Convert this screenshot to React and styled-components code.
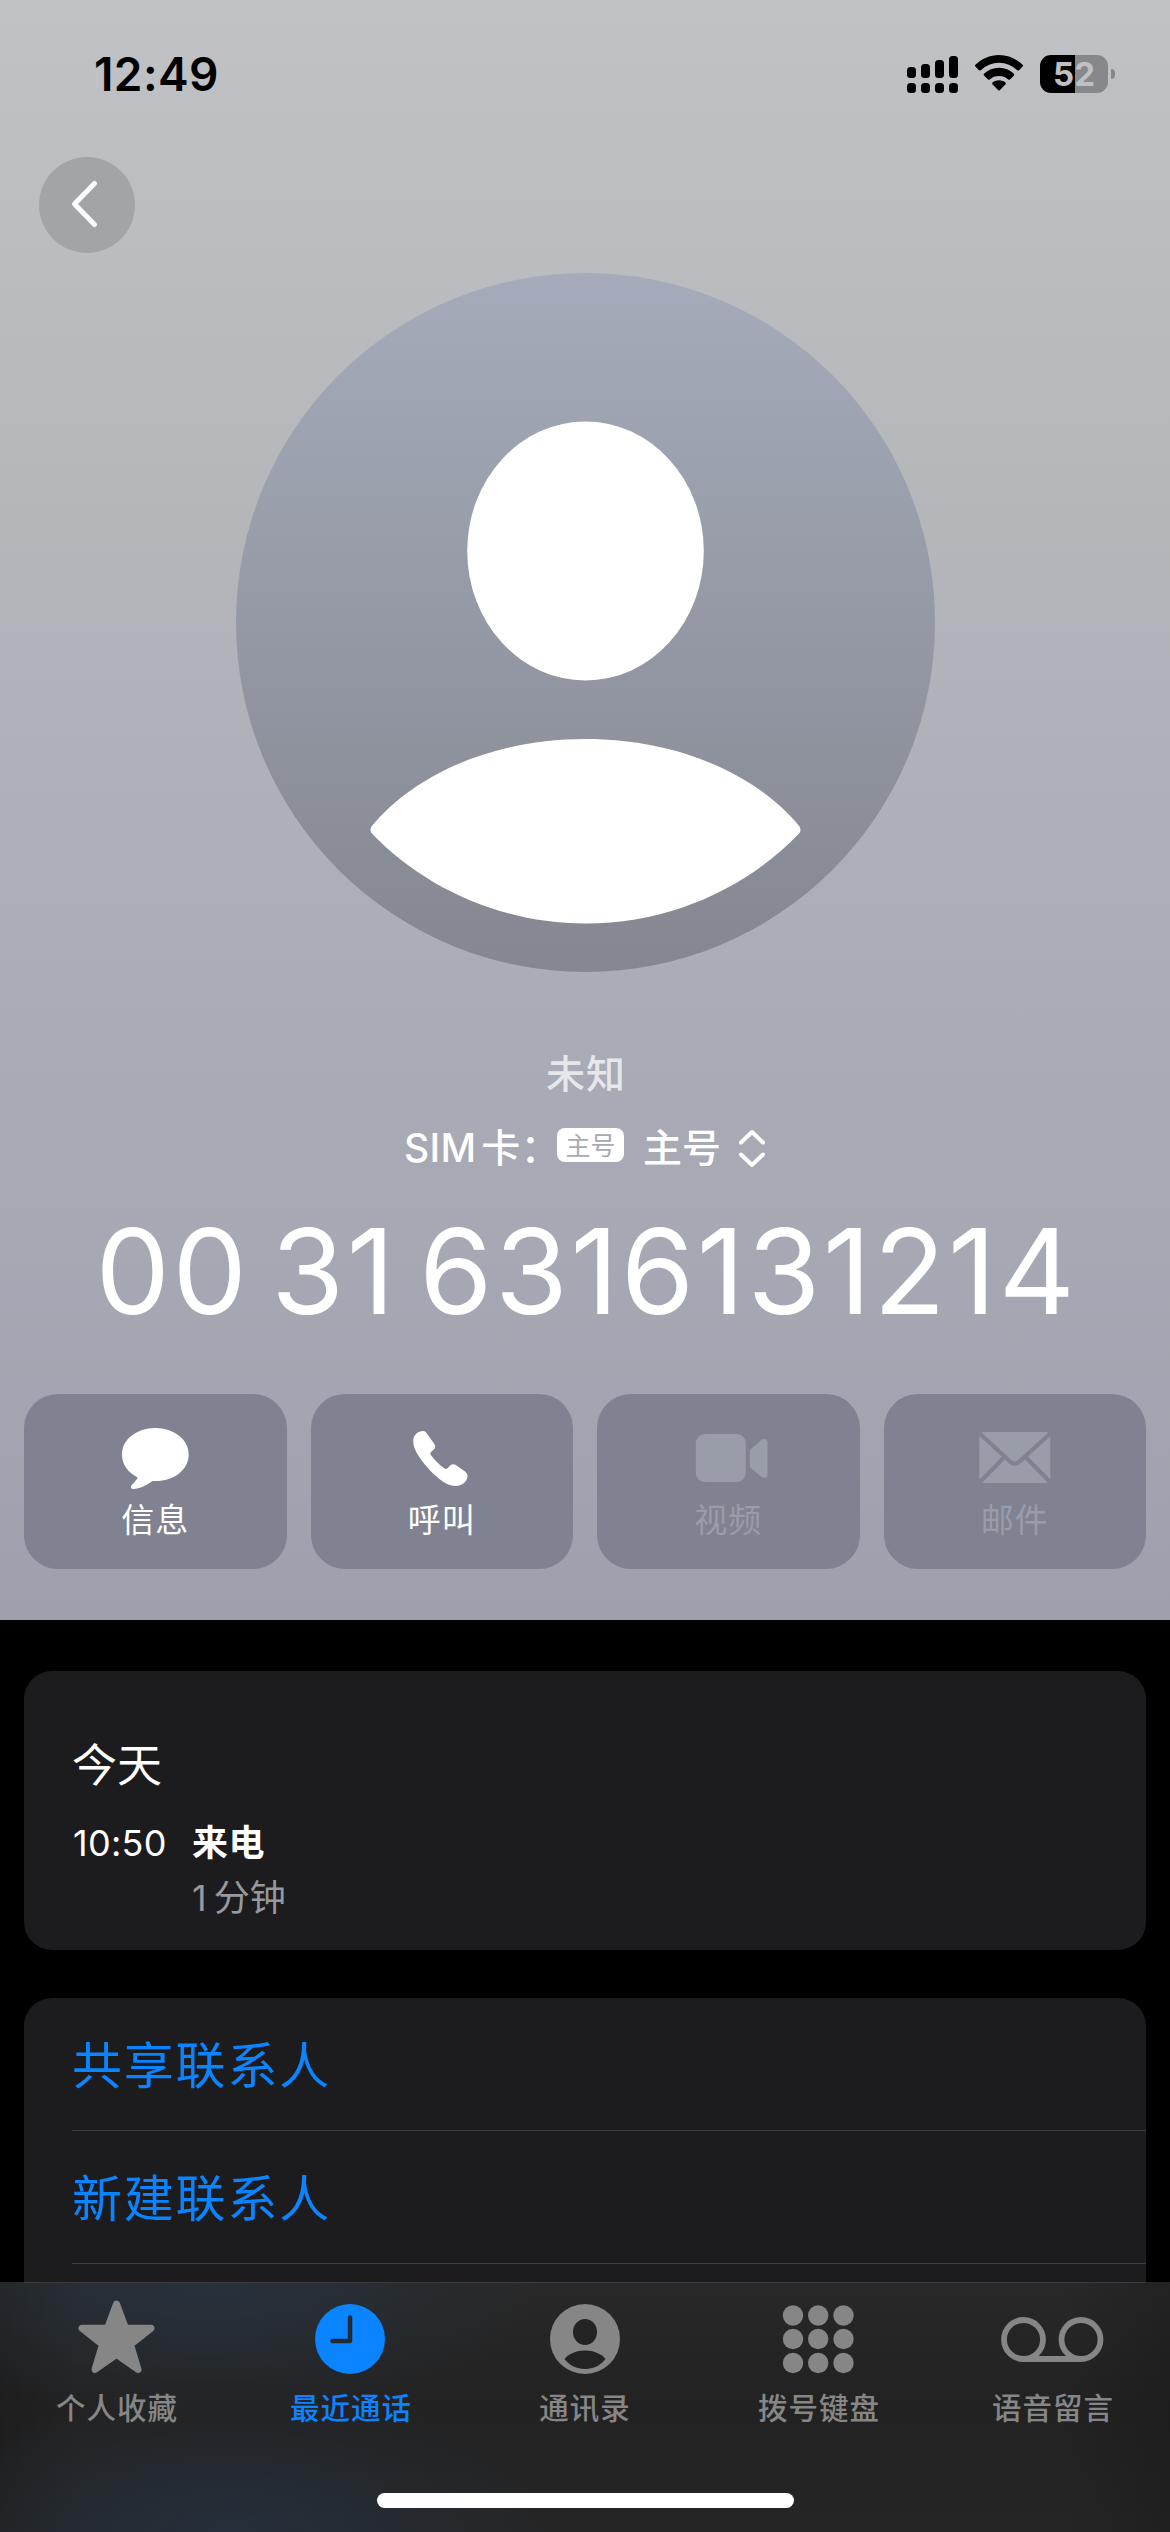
import styled, { createGlobalStyle } from "styled-components";

const GlobalStyle = createGlobalStyle`
  * {
    box-sizing: border-box;
  }

  body {
    margin: 0;
    background: #000;
    color: #fff;
    font-family: Inter, "Noto Sans CJK SC", sans-serif;
  }

  svg {
    display: block;
  }
`;

const Screen = styled.div`
  width: 1170px;
  height: 2532px;
  display: flex;
  flex-direction: column;
  overflow: hidden;
`;

const Content = styled.main`
  flex: 1;
  min-height: 0;
  overflow: hidden;
`;

/* Poster header */

const Poster = styled.header`
  height: 1620px;
  display: flex;
  flex-direction: column;
  align-items: center;
  background: linear-gradient(
    180deg,
    #c1c2c6 0,
    #bbbcc0 270px,
    #b5b6ba 530px,
    #b1b3ba 650px,
    #acafb9 880px,
    #a9abb7 1040px,
    #a6a8b4 1240px,
    #9fa0ad 1620px
  );
`;

const StatusBar = styled.div`
  width: 100%;
  height: 147px;
  display: flex;
  justify-content: space-between;
  padding: 48px 55px 0 94px;
`;

const Clock = styled.span`
  color: #000;
  font-size: 46px;
  font-weight: 600;
  line-height: 52px;
  letter-spacing: 0.4px;
`;

const StatusIcons = styled.div`
  display: flex;
  align-items: flex-start;
  gap: 16px;
  padding-top: 7px;
`;

const BatteryWrapper = styled.div`
  display: flex;
  align-items: center;
  gap: 3px;
  padding-left: 1px;
`;

const Battery = styled.div`
  width: 68px;
  height: 38px;
  border-radius: 11px;
  background: linear-gradient(90deg, #000 35px, #87888c 35px);
  color: #bfc0c4;
  font-size: 33px;
  font-weight: 700;
  line-height: 38px;
  text-align: center;
`;

const BatteryCap = styled.div`
  width: 4px;
  height: 10px;
  border-radius: 0 5px 5px 0;
  background: #87888c;
`;

const NavRow = styled.div`
  width: 100%;
  height: 126px;
  padding: 10px 39px 0;
`;

const BackButton = styled.button`
  width: 96px;
  height: 96px;
  padding: 0;
  border: 0;
  border-radius: 50%;
  background: #a3a4a8;
`;

const Name = styled.div`
  margin-top: 77px;
  padding-left: 2px;
  color: #e6e7ea;
  font-size: 39px;
  font-weight: 500;
  line-height: 50px;
  letter-spacing: 1px;
`;

const SimRow = styled.div`
  display: flex;
  align-items: center;
  height: 50px;
  margin-top: 24px;
  font-size: 39px;
  font-weight: 500;
  line-height: 50px;

  svg {
    margin-left: 17px;
  }
`;

const SimLabel = styled.span`
  margin-right: -3px;
  letter-spacing: 0.4px;
  word-spacing: -6px;
`;

const SimBadge = styled.span`
  width: 67px;
  height: 34px;
  margin: 0 19px 6px 0;
  border-radius: 8px;
  background: #fff;
  color: #a7a9b5;
  font-size: 25px;
  font-weight: 400;
  line-height: 37px;
  text-align: center;
`;

const PhoneNumber = styled.h1`
  margin: 33px 0 0;
  padding-left: 3px;
  font-size: 118px;
  font-weight: 400;
  line-height: 130px;
  letter-spacing: 2.6px;
  word-spacing: -14px;
  white-space: nowrap;
`;

const Actions = styled.div`
  width: 100%;
  display: grid;
  grid-template-columns: repeat(4, 1fr);
  gap: 24px;
  margin-top: 58px;
  padding: 0 24px;
`;

const ActionButton = styled.button`
  height: 175px;
  display: flex;
  flex-direction: column;
  align-items: center;
  padding: 30px 0 0;
  border: 0;
  border-radius: 34px;
  background: #808291;
  color: ${({ $off }) => ($off ? "#999ca9" : "#fff")};
  font-family: inherit;
  font-size: 33px;
  font-weight: 400;
  line-height: 40px;
  letter-spacing: 1px;

  svg {
    margin-bottom: 6px;
  }
`;

/* Call history and contact options */

const Card = styled.section`
  margin: ${({ $top }) => $top}px 24px 0;
  border-radius: 28px;
  background: #1c1c1e;
`;

const CallCard = styled(Card)`
  height: 279px;
  padding: 65px 48px 0;
`;

const Day = styled.h2`
  margin: 0 0 20px;
  font-size: 45px;
  font-weight: 400;
  line-height: 60px;
`;

const CallRow = styled.div`
  display: grid;
  grid-template-columns: 120px 1fr;
  font-size: 36px;
  line-height: 55px;
`;

const CallTime = styled.span`
  padding-left: 1px;
  letter-spacing: 0.3px;
`;

const CallKind = styled.div`
  font-weight: 700;
  letter-spacing: 0.5px;
`;

const Duration = styled.div`
  grid-column: 2;
  color: #98989f;
  word-spacing: -3px;
`;

const Options = styled(Card)`
  height: 400px;
  padding-left: 48px;
`;

const Option = styled.div`
  height: 133px;
  padding-top: 2px;
  border-bottom: 1px solid #3d3d41;
  color: #0a84ff;
  font-size: 50px;
  font-weight: 400;
  line-height: 132px;
  letter-spacing: 1.8px;
`;

/* Tab bar */

const TabBar = styled.nav`
  height: 250px;
  background:
    radial-gradient(ellipse 330px 140px at 210px 0, rgba(38, 56, 74, 0.6), transparent),
    radial-gradient(ellipse 330px 140px at 230px 100%, rgba(36, 54, 74, 0.6), transparent),
    linear-gradient(90deg, rgba(0, 0, 0, 0.14), transparent 80px 1060px, rgba(0, 0, 0, 0.14)),
    linear-gradient(180deg, #282828, #222222 50%, #252525);
`;

const Hairline = styled.div`
  height: 1px;
  margin: 0 24px;
  background: #3c3c3d;
`;

const Tabs = styled.div`
  height: 210px;
  display: grid;
  grid-template-columns: repeat(5, 1fr);
`;

const Tab = styled.div`
  display: flex;
  flex-direction: column;
  align-items: center;
  gap: 10px;
  padding-top: 15px;
  color: ${({ $active }) => ($active ? "#0a84ff" : "#868686")};
  font-size: 29.5px;
  font-weight: 500;
  line-height: 40px;
  letter-spacing: 1px;
`;

const HomeIndicator = styled.div`
  width: 417px;
  height: 15px;
  margin: 0 auto;
  border-radius: 8px;
  background: #fff;
`;

const SignalIcon = () => (
  <svg width="52" height="38" viewBox="0 0 52 38">
    {[12, 9, 5, 1].map((y, i) => (
      <g key={y}>
        <rect x={i * 14} y={y} width="9" height={23 - y} rx="3.5" />
        <rect x={i * 14} y="28" width="9" height="10" rx="3.5" />
      </g>
    ))}
  </svg>
);

const WifiIcon = () => (
  <svg width="48" height="38" viewBox="0 0 48 38">
    <path d="M24 0C33 0 41.500 3.800 47.600 9.800Q48.400 10.700 47.600 11.500L44 15.200Q43.200 16 42.300 15.200A26 26 0 0 0 5.700 15.200Q4.800 16 4 15.200L.4 11.500Q-.4 10.700 .4 9.800C6.500 3.800 15 0 24 0Z" />
    <path d="M24 12.700C29.700 12.700 35 15 39 18.700Q39.800 19.500 39 20.400L35 24.400Q34.200 25.100 33.300 24.400A14.200 14.200 0 0 0 14.700 24.400Q13.800 25.100 13 24.400L9 20.400Q8.200 19.500 9 18.700C13 15 18.300 12.700 24 12.700Z" />
    <path d="M24 25.300C26.600 25.300 28.800 26.200 30.500 27.600Q31.300 28.400 30.500 29.300L25 34.900Q24 35.900 23 34.900L17.500 29.300Q16.700 28.400 17.500 27.600C19.200 26.200 21.400 25.300 24 25.300Z" />
  </svg>
);

const BackIcon = () => (
  <svg width="96" height="96" viewBox="0 0 96 96" fill="none">
    <path
      d="M55.500 26.500L35.500 47L55.500 67.500"
      stroke="#fff"
      strokeWidth="5"
      strokeLinecap="round"
      strokeLinejoin="round"
    />
  </svg>
);

const Avatar = () => (
  <svg width="699" height="699" viewBox="0 0 699 699">
    <defs>
      <linearGradient id="avatarFill" x1="0" y1="0" x2="0" y2="1">
        <stop offset="0" stopColor="#a5abba" />
        <stop offset="1" stopColor="#848790" />
      </linearGradient>
    </defs>
    <circle cx="349.5" cy="349.5" r="349.5" fill="url(#avatarFill)" />
    <ellipse cx="349.5" cy="278" rx="118.300" ry="129.500" fill="#fff" />
    <path
      d="M135.500 553.500C175 505 252 466 349.500 466C447 466 524 505 563.500 553.500Q565.500 557 563.500 560C512 614 435 650.500 349.500 650.500C264 650.500 187 614 135.500 560Q133.500 557 135.500 553.500Z"
      fill="#fff"
    />
  </svg>
);

const UpDownIcon = () => (
  <svg width="28" height="40" viewBox="0 0 28 40" fill="none">
    <path
      d="M3 14.500L14 4L25 14.500M3 26.500L14 37L25 26.500"
      stroke="#fff"
      strokeWidth="4"
      strokeLinecap="round"
      strokeLinejoin="round"
    />
  </svg>
);

const MessageIcon = () => (
  <svg width="80" height="70" viewBox="0 0 80 70" fill="currentColor">
    <path d="M40.300 4C59 4 73.700 15.500 73.700 30.700C73.700 45.500 59 57 40.500 57H37.500C32 61 24.500 65 18.500 65C16 65 15 63.300 16.500 61.300C18.500 59 21.500 56 22.800 53.500C13 48.500 7 40.500 7 30.700C7 15.500 21.500 4 40.300 4Z" />
  </svg>
);

const CallIcon = () => (
  <svg width="80" height="70" viewBox="0 0 80 70" fill="currentColor">
    <path d="M21.100 7C23 7 24 8 25 9.800L32 19.500C34 22 33.500 23.800 31.800 25.500L29.500 27.500C28 28.800 28 29.800 29 31.200C33 36.500 37.500 41 42.500 44.500C43.500 45.200 44.500 45.200 45.500 44.200L48.500 41.200C50.200 39.700 52 39.800 54.500 41.500L63 47.500C65 49 65.800 50.500 65.500 53C65 57.500 60 62 53.700 62C47 62 41.500 58.500 34.500 52.500C26 45.500 18 35 14.500 28.500C12 23.500 11.200 20.500 11.200 17C11.200 11 16 7 21.100 7Z" />
  </svg>
);

const VideoIcon = () => (
  <svg width="80" height="70" viewBox="0 0 80 70" fill="currentColor">
    <rect x="7.800" y="10" width="50" height="48" rx="9" />
    <path d="M61.800 27.500Q61.800 25.800 63.300 24.600L73.500 16Q75 15 76.300 15Q79.500 15 79.500 18.500V50.500Q79.500 54 76.300 54Q75 54 73.500 52.800L63.300 44.400Q61.800 43 61.800 41.500Z" />
  </svg>
);

const MailIcon = () => (
  <svg width="80" height="70" viewBox="0 0 80 70">
    <mask id="envelope">
      <rect x="4.300" y="8" width="71" height="51" rx="5" fill="#fff" />
      <path
        d="M3 8L34.500 37Q39.800 42.500 45 37L77 8M3 60L29 33.500M77 60L51 33.500"
        fill="none"
        stroke="#000"
        strokeWidth="4.200"
      />
    </mask>
    <rect width="80" height="70" fill="currentColor" mask="url(#envelope)" />
  </svg>
);

const StarIcon = () => (
  <svg width="104" height="80" viewBox="0 0 104 80">
    <path
      d="M51.500 6L60.500 30.200H86L65.500 46.500L73 71.500L51.500 56.500L30 71.500L37.500 46.500L17 30.200H42.500Z"
      fill="currentColor"
      stroke="currentColor"
      strokeWidth="7"
      strokeLinejoin="round"
    />
  </svg>
);

const ClockIcon = () => (
  <svg width="104" height="80" viewBox="0 0 104 80">
    <circle cx="51" cy="41" r="35" fill="currentColor" />
    <path
      d="M51 19.500V43H33.500"
      fill="none"
      stroke="#232a30"
      strokeWidth="4.500"
      strokeLinecap="round"
      strokeLinejoin="round"
    />
  </svg>
);

const ContactIcon = () => (
  <svg width="104" height="80" viewBox="0 0 104 80">
    <circle cx="52" cy="41" r="35" fill="currentColor" />
    <ellipse cx="52" cy="34" rx="12" ry="13" fill="#232323" />
    <path d="M31.500 61C36 55.500 43.500 52.500 52 52.500C60.500 52.500 68 55.500 72.500 61C67.500 67.500 60.500 71 52 71C43.500 71 36.500 67.500 31.500 61Z" fill="#232323" />
  </svg>
);

const KeypadIcon = () => (
  <svg width="104" height="80" viewBox="0 0 104 80" fill="currentColor">
    {[17.5, 41, 65].map((y) =>
      [26, 51.2, 76.5].map((x) => <circle key={`${x}-${y}`} cx={x} cy={y} r="10.200" />)
    )}
  </svg>
);

const VoicemailIcon = () => (
  <svg width="104" height="80" viewBox="0 0 104 80" fill="none" stroke="currentColor" strokeWidth="5.800">
    <circle cx="22.500" cy="41.500" r="19.500" />
    <circle cx="80" cy="41.500" r="19.500" />
    <path d="M22.500 61H80" />
  </svg>
);

const actions = [
  { label: "信息", Icon: MessageIcon },
  { label: "呼叫", Icon: CallIcon },
  { label: "视频", Icon: VideoIcon, off: true },
  { label: "邮件", Icon: MailIcon, off: true },
];

const tabs = [
  { label: "个人收藏", Icon: StarIcon },
  { label: "最近通话", Icon: ClockIcon, active: true },
  { label: "通讯录", Icon: ContactIcon },
  { label: "拨号键盘", Icon: KeypadIcon },
  { label: "语音留言", Icon: VoicemailIcon },
];

export default function App() {
  return (
    <>
      <GlobalStyle />
      <Screen>
        <Content>
          <Poster>
            <StatusBar>
              <Clock>12:49</Clock>
              <StatusIcons>
                <SignalIcon />
                <WifiIcon />
                <BatteryWrapper>
                  <Battery>52</Battery>
                  <BatteryCap />
                </BatteryWrapper>
              </StatusIcons>
            </StatusBar>
            <NavRow>
              <BackButton aria-label="返回">
                <BackIcon />
              </BackButton>
            </NavRow>
            <Avatar />
            <Name>未知</Name>
            <SimRow>
              <SimLabel>SIM 卡：</SimLabel>
              <SimBadge>主号</SimBadge>
              <span>主号</span>
              <UpDownIcon />
            </SimRow>
            <PhoneNumber>00 31 6316131214</PhoneNumber>
            <Actions>
              {actions.map(({ label, Icon, off }) => (
                <ActionButton key={label} $off={off}>
                  <Icon />
                  {label}
                </ActionButton>
              ))}
            </Actions>
          </Poster>

          <CallCard $top={51}>
            <Day>今天</Day>
            <CallRow>
              <CallTime>10:50</CallTime>
              <CallKind>来电</CallKind>
              <Duration>1 分钟</Duration>
            </CallRow>
          </CallCard>

          <Options $top={48}>
            <Option>共享联系人</Option>
            <Option>新建联系人</Option>
          </Options>
        </Content>

        <TabBar>
          <Hairline />
          <Tabs>
            {tabs.map(({ label, Icon, active }) => (
              <Tab key={label} $active={active}>
                <Icon />
                {label}
              </Tab>
            ))}
          </Tabs>
          <HomeIndicator />
        </TabBar>
      </Screen>
    </>
  );
}
